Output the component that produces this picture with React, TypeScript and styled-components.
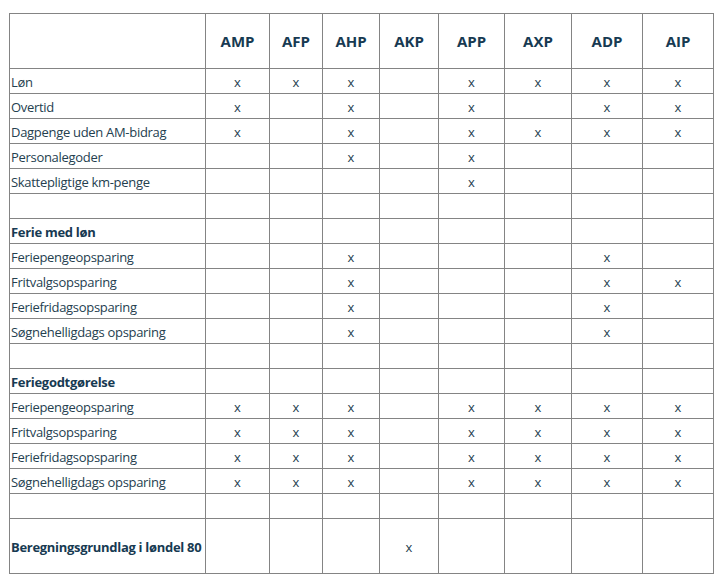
import React from "react";
import styled, { createGlobalStyle } from "styled-components";

const Global = createGlobalStyle`
  html, body { margin: 0; padding: 0; background: #fff; }
  body { font-family: "Open Sans", "Noto Sans", sans-serif; }
`;

const Page = styled.div`
  padding: 13px 0 0 9px;
`;

const Table = styled.table`
  border-collapse: collapse;
  table-layout: fixed;
  width: 705px;
  color: #1f3b4d;
`;

const HeadCell = styled.th`
  border: 1px solid #848484;
  height: 54px;
  padding: 0;
  line-height: 18px;
  font-size: 15px;
  font-weight: 700;
  color: #173a52;
  text-align: center;
  vertical-align: middle;
`;

const Row = styled.tr<{ $tall?: boolean }>`
  height: ${(p) => (p.$tall ? "55px" : "25px")};
`;

const LabelCell = styled.td<{ $bold?: boolean }>`
  border: 1px solid #848484;
  padding: 2px 0 0 1px;
  line-height: 18px;
  font-size: 13px;
  font-weight: ${(p) => (p.$bold ? 700 : 400)};
  color: ${(p) => (p.$bold ? "#173a52" : "#24404f")};
  white-space: nowrap;
  vertical-align: middle;
  letter-spacing: -0.3px;
`;

const MarkCell = styled.td`
  border: 1px solid #848484;
  padding: 2px 0 0;
  line-height: 18px;
  font-size: 13px;
  text-align: center;
  vertical-align: middle;
  color: #24404f;
`;

const cols = ["AMP", "AFP", "AHP", "AKP", "APP", "AXP", "ADP", "AIP"];
const widths = [196, 64, 53, 57, 59, 66, 67, 71, 71];

type RowData = { label: string; marks: string; bold?: boolean; tall?: boolean };

// marks: 8 chars, 'x' or '.'
const rows: RowData[] = [
  { label: "Løn", marks: "xxx.xxxx" },
  { label: "Overtid", marks: "x.x.x.xx" },
  { label: "Dagpenge uden AM-bidrag", marks: "x.x.xxxx" },
  { label: "Personalegoder", marks: "..x.x..." },
  { label: "Skattepligtige km-penge", marks: "....x..." },
  { label: "", marks: "........" },
  { label: "Ferie med løn", marks: "........", bold: true },
  { label: "Feriepengeopsparing", marks: "..x...x." },
  { label: "Fritvalgsopsparing", marks: "..x...xx" },
  { label: "Feriefridagsopsparing", marks: "..x...x." },
  { label: "Søgnehelligdags opsparing", marks: "..x...x." },
  { label: "", marks: "........" },
  { label: "Feriegodtgørelse", marks: "........", bold: true },
  { label: "Feriepengeopsparing", marks: "xxx.xxxx" },
  { label: "Fritvalgsopsparing", marks: "xxx.xxxx" },
  { label: "Feriefridagsopsparing", marks: "xxx.xxxx" },
  { label: "Søgnehelligdags opsparing", marks: "xxx.xxxx" },
  { label: "", marks: "........" },
  { label: "Beregningsgrundlag i løndel 80", marks: "...x....", bold: true, tall: true },
];

export default function App() {
  return (
    <>
      <Global />
      <Page>
        <Table>
          <colgroup>
            {widths.map((w, i) => (
              <col key={i} style={{ width: w }} />
            ))}
          </colgroup>
          <thead>
            <tr>
              <HeadCell />
              {cols.map((c) => (
                <HeadCell key={c}>{c}</HeadCell>
              ))}
            </tr>
          </thead>
          <tbody>
            {rows.map((r, i) => (
              <Row key={i} $tall={r.tall}>
                <LabelCell $bold={r.bold}>{r.label}</LabelCell>
                {r.marks.split("").map((m, j) => (
                  <MarkCell key={j}>{m === "x" ? "x" : ""}</MarkCell>
                ))}
              </Row>
            ))}
          </tbody>
        </Table>
      </Page>
    </>
  );
}
